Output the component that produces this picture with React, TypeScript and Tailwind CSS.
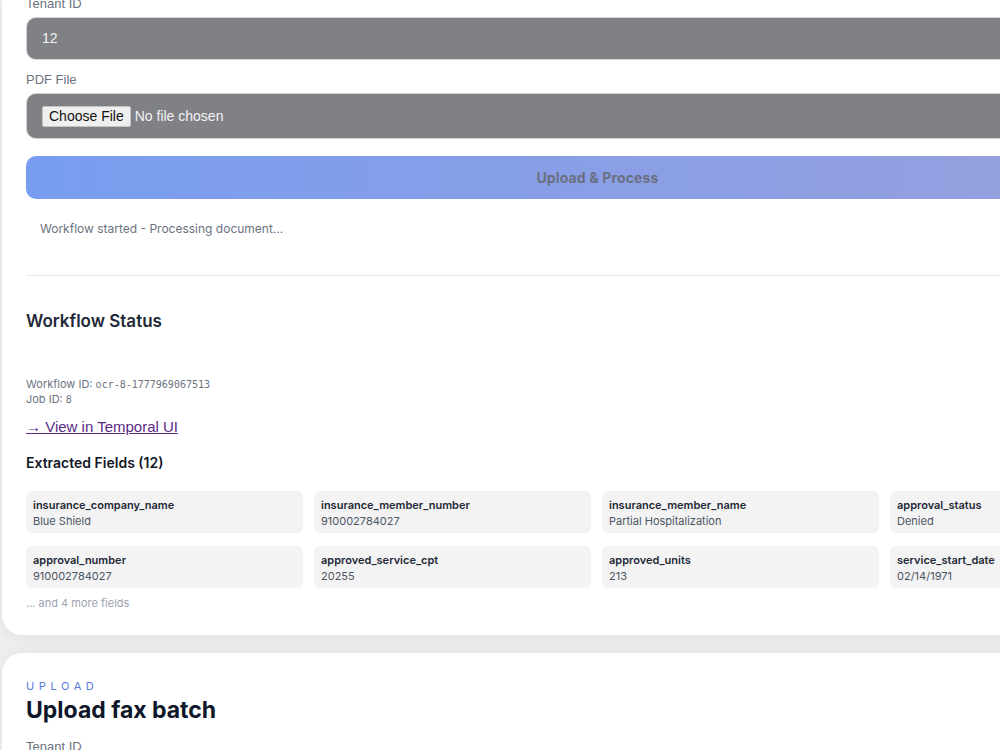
import React from "react";

// ============================================================
// Data
// ============================================================

const FIELDS: { name: string; value: string }[] = [
  { name: "insurance_company_name", value: "Blue Shield" },
  { name: "insurance_member_number", value: "910002784027" },
  { name: "insurance_member_name", value: "Partial Hospitalization" },
  { name: "approval_status", value: "Denied" },
  { name: "approval_number", value: "910002784027" },
  { name: "approved_service_cpt", value: "20255" },
  { name: "approved_units", value: "213" },
  { name: "service_start_date", value: "02/14/1971" },
];

const SANS = "font-['Inter','Noto_Sans',sans-serif]";
const ARIAL = "font-['Liberation_Sans','Arial',sans-serif]";
const MONO = "font-['DejaVu_Sans_Mono','Liberation_Mono',monospace]";

// ============================================================
// Pieces
// ============================================================

function FieldLabel({ children }: { children: React.ReactNode }) {
  return (
    <div className={`${ARIAL} mb-[5px] text-[13px] leading-4 text-[#6b7280]`}>
      {children}
    </div>
  );
}

function FieldCell({ name, value }: { name: string; value: string }) {
  return (
    <div className="h-[42px] rounded-md bg-[#f3f3f3] px-[7px] pt-[7px]">
      <div className="text-[11px] font-semibold leading-[14px] text-[#1f2937]">
        {name}
      </div>
      <div className="mt-[2px] text-[11px] leading-[14px] text-[#4b5563]">
        {value}
      </div>
    </div>
  );
}

// ============================================================
// App
// ============================================================

export default function App() {
  return (
    <div className={`${SANS} h-[750px] w-[1000px] overflow-hidden bg-[#efefef]`}>
      <div className="w-[1200px]">
        {/* Upload + status card */}
        <div className="ml-[2px] w-[1191px] rounded-b-[20px] bg-white px-6 pb-[25px] shadow-[0_4px_14px_rgba(0,0,0,0.06)]">
          <div className="-mt-[4px]">
            <FieldLabel>Tenant ID</FieldLabel>
            <div
              className={`${ARIAL} flex h-[43px] items-center rounded-[10px] border border-[#d2d3d5] bg-[#808185] px-[15px] text-[14px] text-[#f4f4f5]`}
            >
              12
            </div>
          </div>

          <div className="mt-[12px]">
            <FieldLabel>PDF File</FieldLabel>
            <div
              className={`${ARIAL} flex h-[46px] items-center rounded-[10px] border border-[#d2d3d5] bg-[#808185] px-[15px] text-[14px]`}
            >
              <span className="rounded-[2px] border border-[#c4c4c4] bg-[#efefef] px-[6px] py-[1px] leading-[17px] text-[#111]">
                Choose File
              </span>
              <span className="ml-[4px] text-[#f4f4f5]">No file chosen</span>
            </div>
          </div>

          <button
            type="button"
            className="mt-[17px] flex h-[43px] w-full items-center justify-center rounded-[10px] bg-gradient-to-r from-[#789df0] to-[#99a0dc] text-[14px] font-bold tracking-[0.01em] text-[#6b6f82]"
          >
            Upload &amp; Process
          </button>

          <div className="mt-[22px] px-[14px] text-[12px] leading-4 text-[#6b7280]">
            Workflow started - Processing document...
          </div>

          <div className="mt-[38px] border-t border-[#e5e7eb]" />

          {/* Workflow status */}
          <h2 className="mt-[33px] text-[17px] font-semibold leading-6 text-[#1f2937]">
            Workflow Status
          </h2>

          <div className="mt-[44px] text-[11px] leading-[14px] text-[#6b7280]">
            <div>
              Workflow ID: <span className={`${MONO} text-[10px]`}>ocr-8-1777969067513</span>
            </div>
            <div>
              Job ID: <span className={`${MONO} text-[10px]`}>8</span>
            </div>
          </div>

          <a
            href="#"
            className={`${ARIAL} mt-[10px] inline-block text-[15px] leading-5 text-[#5b2a86] underline`}
          >
            → View in Temporal UI
          </a>

          <h3 className="mt-[15px] text-[14px] font-semibold leading-5 text-[#111827]">
            Extracted Fields (12)
          </h3>

          <div className="mt-[18px] grid grid-cols-[repeat(4,277px)] gap-x-[11px] gap-y-[13px]">
            {FIELDS.map((f) => (
              <FieldCell key={f.name} name={f.name} value={f.value} />
            ))}
          </div>

          <div className="mt-[8px] text-[11px] leading-[14px] text-[#9ca3af]">
            ... and 4 more fields
          </div>
        </div>

        {/* Upload fax batch card */}
        <div className="mt-[18px] ml-[2px] w-[1191px] rounded-t-[20px] bg-white px-6 pt-[26px] pb-10 shadow-[0_-2px_14px_rgba(0,0,0,0.05)]">
          <div className="text-[11px] leading-[14px] tracking-[0.42em] text-[#5b7be0]">
            UPLOAD
          </div>
          <h2 className="mt-[3px] text-[23px] font-bold leading-7 text-[#0f172a]">
            Upload fax batch
          </h2>
          <div className="mt-[15px]">
            <FieldLabel>Tenant ID</FieldLabel>
          </div>
        </div>
      </div>
    </div>
  );
}
